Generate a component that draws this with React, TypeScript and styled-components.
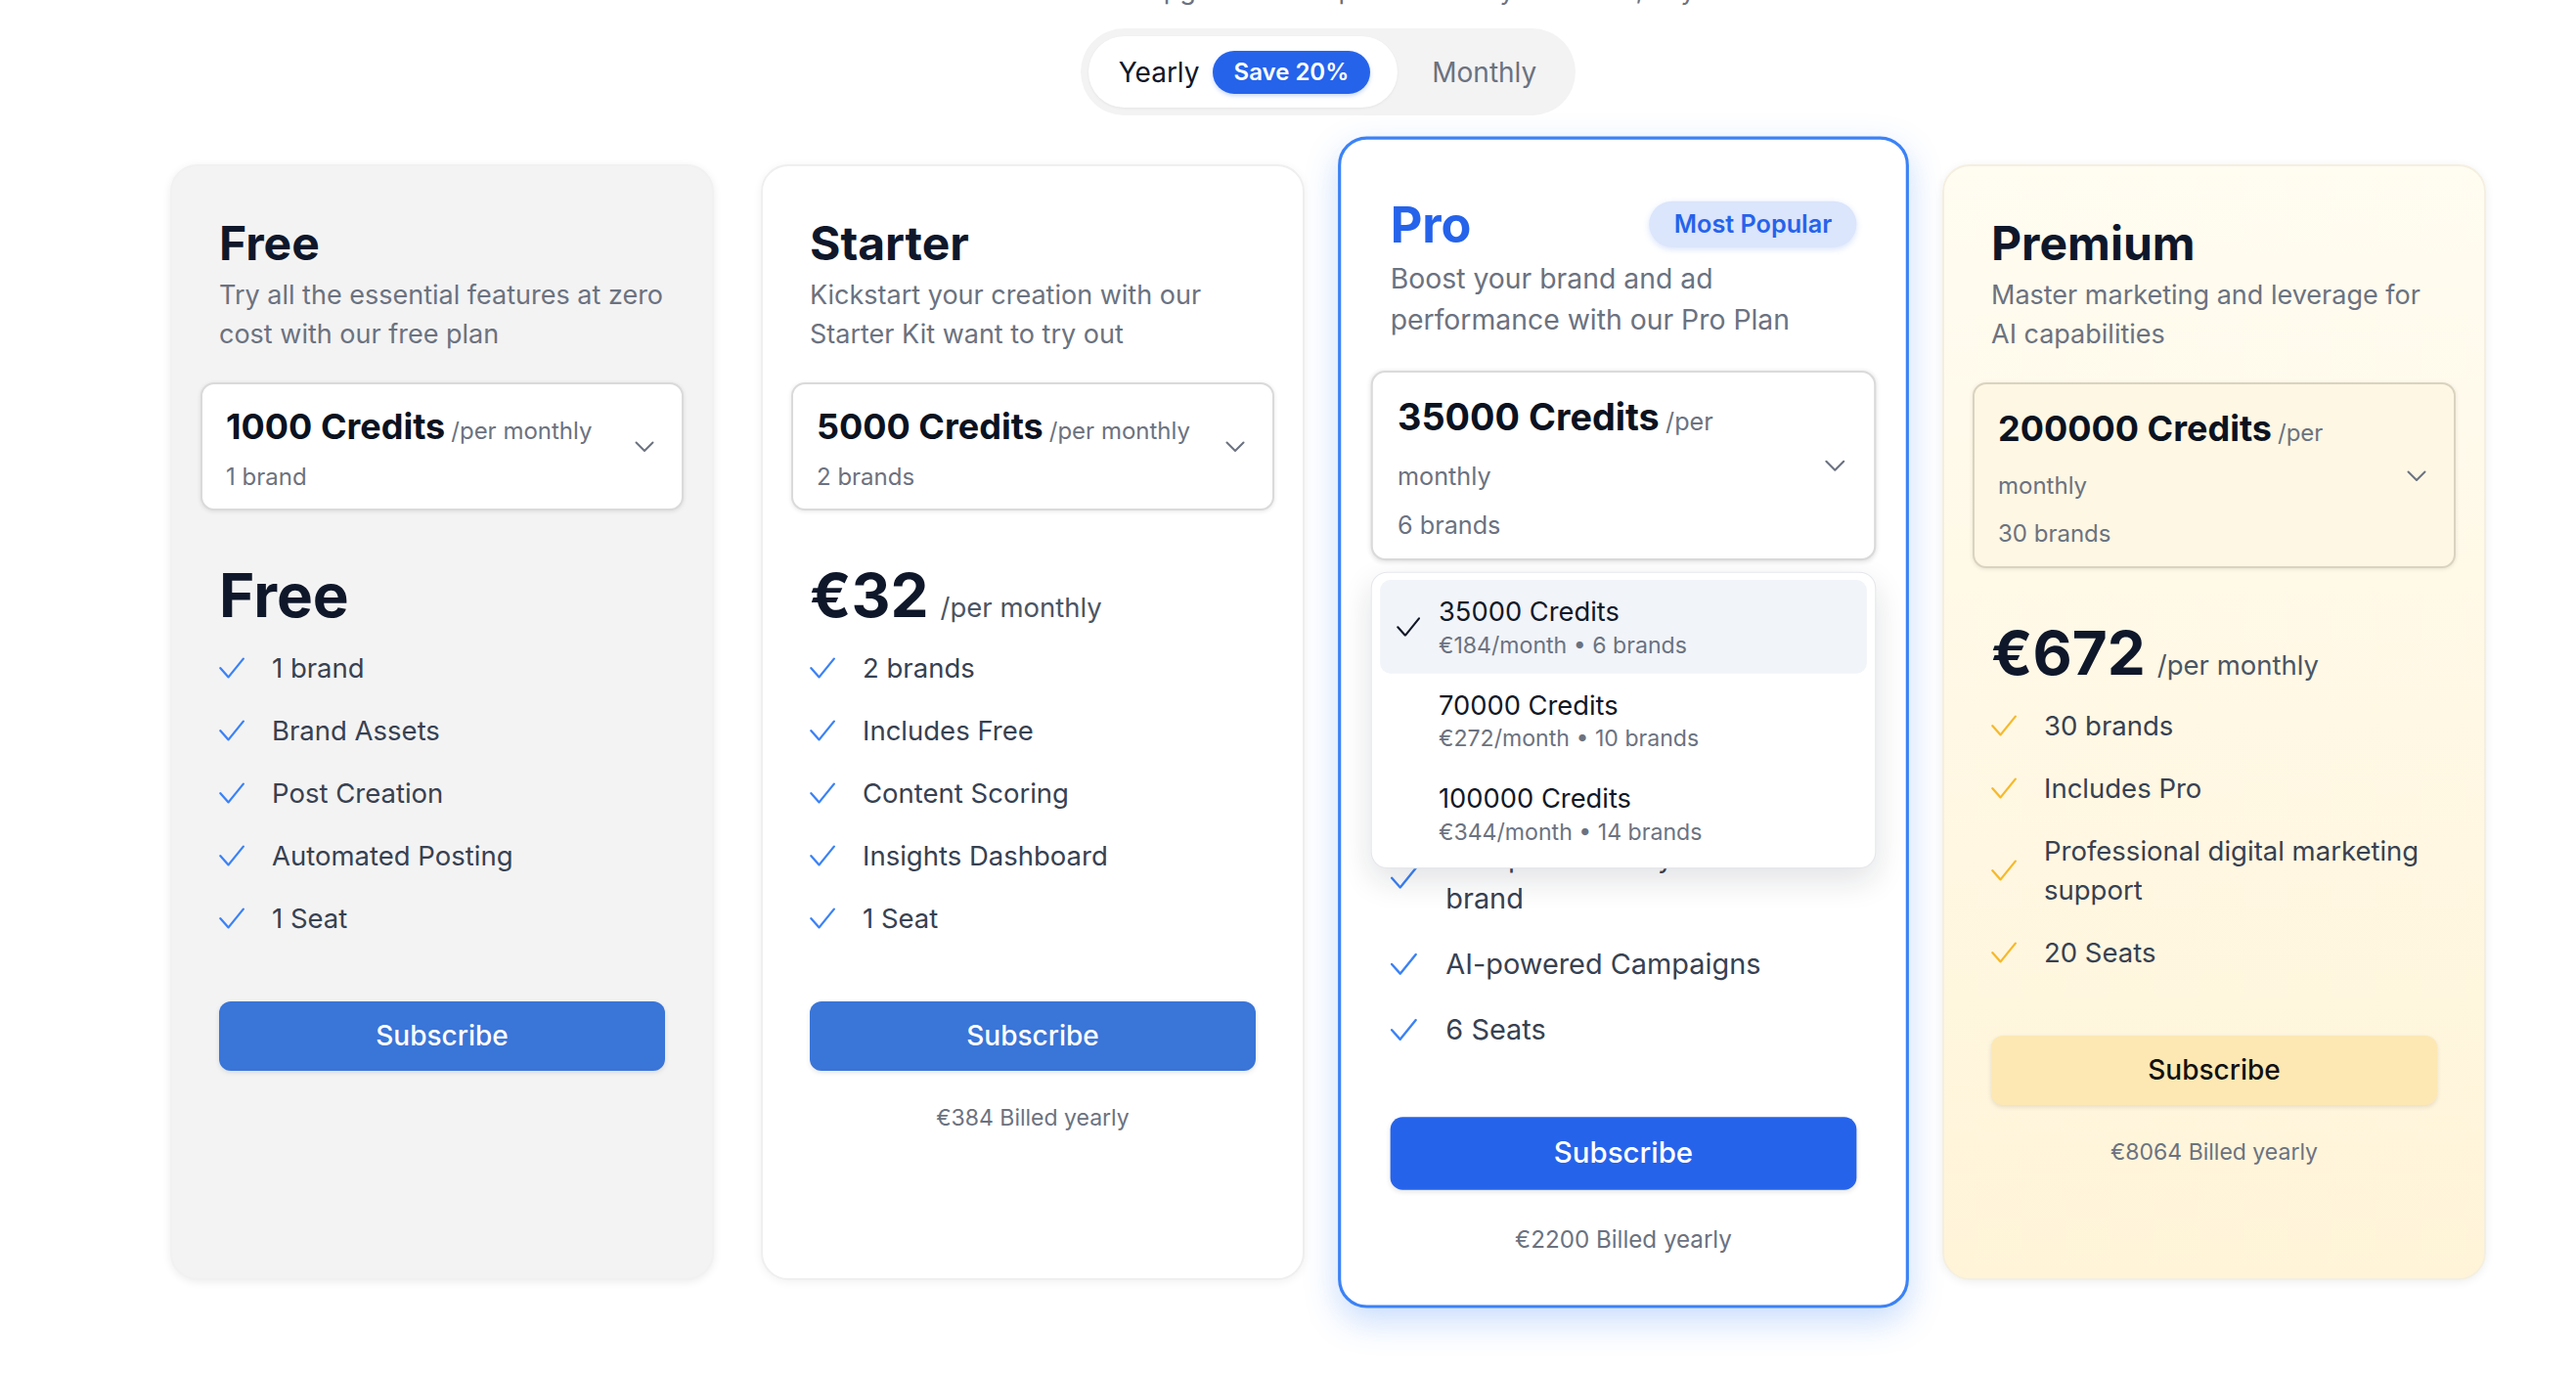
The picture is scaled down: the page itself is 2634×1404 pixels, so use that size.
import React from "react";
import styled, { createGlobalStyle, css } from "styled-components";

type Variant = "free" | "starter" | "pro" | "premium";

type Option = { credits: string; price: string; brands: string };

type Plan = {
  id: Variant;
  name: string;
  desc: string;
  credits: string;
  brands: string;
  price: string;
  per?: string;
  features: string[];
  billed?: string;
  popular?: boolean;
  options?: Option[];
};

const plans: Plan[] = [
  {
    id: "free",
    name: "Free",
    desc: "Try all the essential features at zero cost with our free plan",
    credits: "1000",
    brands: "1 brand",
    price: "Free",
    features: ["1 brand", "Brand Assets", "Post Creation", "Automated Posting", "1 Seat"],
  },
  {
    id: "starter",
    name: "Starter",
    desc: "Kickstart your creation with our Starter Kit want to try out",
    credits: "5000",
    brands: "2 brands",
    price: "€32",
    per: "/per monthly",
    features: ["2 brands", "Includes Free", "Content Scoring", "Insights Dashboard", "1 Seat"],
    billed: "€384 Billed yearly",
  },
  {
    id: "pro",
    name: "Pro",
    desc: "Boost your brand and ad performance with our Pro Plan",
    credits: "35000",
    brands: "6 brands",
    price: "€184",
    per: "/per monthly",
    features: [
      "6 brands",
      "Includes Starter",
      "Competitor analytics for each brand",
      "AI-powered Campaigns",
      "6 Seats",
    ],
    billed: "€2200 Billed yearly",
    popular: true,
    options: [
      { credits: "35000", price: "€184", brands: "6 brands" },
      { credits: "70000", price: "€272", brands: "10 brands" },
      { credits: "100000", price: "€344", brands: "14 brands" },
    ],
  },
  {
    id: "premium",
    name: "Premium",
    desc: "Master marketing and leverage for AI capabilities",
    credits: "200000",
    brands: "30 brands",
    price: "€672",
    per: "/per monthly",
    features: ["30 brands", "Includes Pro", "Professional digital marketing support", "20 Seats"],
    billed: "€8064 Billed yearly",
  },
];

const GlobalStyle = createGlobalStyle`
  html, body {
    margin: 0;
    padding: 0;
    background: #ffffff;
  }
  body {
    font-family: Inter, "Noto Sans", "Liberation Sans", sans-serif;
    color: #0f172a;
    overflow: hidden;
  }
`;

const Page = styled.div`
  box-sizing: border-box;
  width: 2634px;
  height: 1404px;
  padding-left: 82px;
  display: flex;
  flex-direction: column;
  align-items: center;
`;

const Subtitle = styled.p`
  margin: -30px 0 0;
  font-size: 27px;
  line-height: 40px;
  color: #6b7280;
  text-align: center;
`;

const Toggle = styled.div`
  margin-top: 19px;
  display: inline-flex;
  align-items: center;
  padding: 8px;
  border-radius: 999px;
  background: #f3f3f3;
`;

const ToggleOption = styled.button<{ $active?: boolean }>`
  display: flex;
  align-items: center;
  gap: 13px;
  height: 73px;
  border: none;
  border-radius: 999px;
  font-family: inherit;
  font-size: 28px;
  cursor: pointer;
  ${({ $active }) =>
    $active
      ? css`
          padding: 0 28px 0 31px;
          background: #ffffff;
          color: #0f172a;
          box-shadow: 0 1px 3px rgba(0, 0, 0, 0.06);
        `
      : css`
          padding: 0 32px 0 35px;
          background: transparent;
          color: #6b7280;
        `}
`;

const SaveBadge = styled.span`
  display: inline-flex;
  align-items: center;
  height: 44px;
  padding: 0 22px;
  border-radius: 999px;
  background: #2563eb;
  color: #ffffff;
  font-size: 24px;
  font-weight: 600;
  box-shadow: 0 2px 4px rgba(37, 99, 235, 0.25);
`;

const Cards = styled.div`
  margin-top: 50px;
  display: flex;
  align-items: stretch;
  gap: 48px;
`;

const cardVariants = {
  free: css`
    background: #f3f3f3;
    border: 2px solid #f1f1f1;
    box-shadow: 0 2px 8px rgba(0, 0, 0, 0.08);
  `,
  starter: css`
    background: #ffffff;
    border: 2px solid #efefef;
    box-shadow: 0 2px 10px rgba(0, 0, 0, 0.06);
  `,
  pro: css`
    padding-top: 54px;
    padding-bottom: 46px;
    background: #ffffff;
    border: 3px solid #3b82f6;
    transform: scale(1.05);
    z-index: 2;
    box-shadow: 0 12px 32px rgba(59, 130, 246, 0.28);
  `,
  premium: css`
    background: linear-gradient(180deg, #fffcf1 0%, #fff4d8 100%);
    border: 2px solid #f4efe0;
    box-shadow: 0 2px 10px rgba(0, 0, 0, 0.07);
  `,
};

const Card = styled.div<{ $variant: Variant }>`
  box-sizing: border-box;
  position: relative;
  flex: 0 0 556px;
  width: 556px;
  padding: 50px 48px 48px;
  border-radius: 28px;
  display: flex;
  flex-direction: column;
  ${({ $variant }) => cardVariants[$variant]}
`;

const TitleRow = styled.div`
  display: flex;
  align-items: center;
  justify-content: space-between;
`;

const Title = styled.h2<{ $accent?: boolean }>`
  margin: 0;
  font-size: 48px;
  font-weight: 700;
  line-height: 1.2;
  color: ${({ $accent }) => ($accent ? "#2563eb" : "#0f172a")};
`;

const PopularBadge = styled.span`
  display: inline-flex;
  align-items: center;
  height: 45px;
  padding: 0 24px;
  border-radius: 999px;
  background: #dbe5fb;
  color: #2563eb;
  font-size: 24px;
  font-weight: 600;
  box-shadow: 0 2px 6px rgba(37, 99, 235, 0.18);
`;

const Description = styled.p`
  margin: 4px 0 0;
  font-size: 27px;
  line-height: 40px;
  color: #6b7280;
`;

const SelectWrap = styled.div`
  position: relative;
  margin: 29px -19px 0;
`;

const SelectBox = styled.div<{ $cream?: boolean }>`
  box-sizing: border-box;
  display: flex;
  align-items: center;
  justify-content: space-between;
  gap: 12px;
  padding: ${({ $cream }) => ($cream ? "18px 28px 15px 24px" : "16px 28px 14px 24px")};
  border-radius: 14px;
  border: 2px solid ${({ $cream }) => ($cream ? "#d9d3bf" : "#dadada")};
  background: ${({ $cream }) => ($cream ? "#fdf7e4" : "#ffffff")};
  box-shadow: 0 1px 4px rgba(0, 0, 0, 0.1);
`;

const SelectText = styled.div`
  max-width: 388px;
`;

const CreditsLine = styled.div`
  font-size: 36px;
  font-weight: 700;
  line-height: 54px;
  color: #0b1220;
`;

const CreditsPer = styled.span`
  margin-left: 6px;
  font-size: 24px;
  font-weight: 400;
  line-height: 1;
  color: #6b7280;
`;

const BrandsLine = styled.div<{ $roomy?: boolean }>`
  margin-top: ${({ $roomy }) => ($roomy ? "9px" : "7px")};
  font-size: 24px;
  line-height: 36px;
  color: #6b7280;
`;

const Menu = styled.div`
  position: absolute;
  top: calc(100% + 11px);
  left: 0;
  right: 0;
  z-index: 5;
  padding: 7px 8px;
  border-radius: 16px;
  border: 1px solid #e5e7eb;
  background: #ffffff;
  box-shadow: 0 12px 30px rgba(15, 23, 42, 0.12);
`;

const MenuItem = styled.div<{ $selected?: boolean }>`
  display: flex;
  align-items: center;
  gap: 17px;
  padding: 14px 20px 13px 14px;
  border-radius: 10px;
  background: ${({ $selected }) => ($selected ? "#f1f4f9" : "transparent")};
`;

const MenuCheckSlot = styled.span`
  flex: 0 0 26px;
  display: flex;
  justify-content: center;
`;

const MenuTitle = styled.div`
  font-size: 26px;
  line-height: 34px;
  color: #111827;
`;

const MenuSub = styled.div`
  font-size: 22px;
  line-height: 30px;
  color: #6b7280;
`;

const PriceRow = styled.div`
  margin-top: 50px;
  display: flex;
  align-items: baseline;
  gap: 12px;
`;

const Amount = styled.span`
  font-size: 62px;
  font-weight: 700;
  line-height: 74px;
  color: #0f172a;
`;

const AmountPer = styled.span`
  font-size: 27.5px;
  color: #4b5563;
`;

const Features = styled.ul`
  list-style: none;
  margin: 17px 0 0;
  padding: 0;
  display: flex;
  flex-direction: column;
  gap: 24px;
`;

const Feature = styled.li`
  display: flex;
  align-items: center;
  gap: 28px;
  font-size: 27.5px;
  line-height: 40px;
  color: #374151;
`;

const buttonVariants = {
  free: css`
    background: #3a75d8;
    color: #ffffff;
  `,
  starter: css`
    background: #3a75d8;
    color: #ffffff;
  `,
  pro: css`
    background: #2563eb;
    color: #ffffff;
  `,
  premium: css`
    background: #fde8b4;
    color: #111111;
  `,
};

const SubscribeButton = styled.button<{ $variant: Variant }>`
  margin-top: 65px;
  height: 71px;
  width: 100%;
  border: none;
  border-radius: 12px;
  font-family: inherit;
  font-size: 28px;
  font-weight: 500;
  cursor: pointer;
  box-shadow: 0 2px 5px rgba(0, 0, 0, 0.1);
  ${({ $variant }) => buttonVariants[$variant]}
`;

const Billed = styled.div`
  margin-top: 30px;
  text-align: center;
  font-size: 23px;
  line-height: 36px;
  color: #6b7280;
`;

const CheckMark = ({ color, width = 26 }: { color: string; width?: number }) => (
  <svg width={width} height={(width * 22) / 26} viewBox="0 0 26 22" fill="none" style={{ flexShrink: 0 }}>
    <path
      d="M1.4 11.2 L9.6 20.4 L24.8 1.6"
      stroke={color}
      strokeWidth={2.3}
      strokeLinecap="round"
      strokeLinejoin="round"
    />
  </svg>
);

const Chevron = () => (
  <svg width="20" height="12" viewBox="0 0 20 12" fill="none" style={{ flexShrink: 0 }}>
    <path d="M1.5 1.5 L10 10 L18.5 1.5" stroke="#6b7280" strokeWidth={2} strokeLinecap="round" strokeLinejoin="round" />
  </svg>
);

const checkColor = (v: Variant) => (v === "premium" ? "#f6b92b" : "#3b82f6");

function PlanCard({ plan }: { plan: Plan }) {
  const cream = plan.id === "premium";
  return (
    <Card $variant={plan.id}>
      <TitleRow>
        <Title $accent={plan.id === "pro"}>{plan.name}</Title>
        {plan.popular && <PopularBadge>Most Popular</PopularBadge>}
      </TitleRow>
      <Description>{plan.desc}</Description>

      <SelectWrap>
        <SelectBox $cream={cream}>
          <SelectText>
            <CreditsLine>
              {plan.credits} Credits<CreditsPer>/per monthly</CreditsPer>
            </CreditsLine>
            <BrandsLine $roomy={cream}>{plan.brands}</BrandsLine>
          </SelectText>
          <Chevron />
        </SelectBox>
        {plan.options && (
          <Menu>
            {plan.options.map((o) => (
              <MenuItem key={o.credits} $selected={o.credits === plan.credits}>
                <MenuCheckSlot>
                  {o.credits === plan.credits && <CheckMark color="#111827" width={23} />}
                </MenuCheckSlot>
                <div>
                  <MenuTitle>{o.credits} Credits</MenuTitle>
                  <MenuSub>
                    {o.price}/month • {o.brands}
                  </MenuSub>
                </div>
              </MenuItem>
            ))}
          </Menu>
        )}
      </SelectWrap>

      <PriceRow>
        <Amount>{plan.price}</Amount>
        {plan.per && <AmountPer>{plan.per}</AmountPer>}
      </PriceRow>

      <Features>
        {plan.features.map((f) => (
          <Feature key={f}>
            <CheckMark color={checkColor(plan.id)} />
            <span>{f}</span>
          </Feature>
        ))}
      </Features>

      <SubscribeButton $variant={plan.id}>Subscribe</SubscribeButton>
      {plan.billed && <Billed>{plan.billed}</Billed>}
    </Card>
  );
}

export default function App() {
  return (
    <>
      <GlobalStyle />
      <Page>
        <Subtitle>Start free and then upgrade to the plan that fits your brand, anytime</Subtitle>
        <Toggle>
          <ToggleOption $active>
            Yearly
            <SaveBadge>Save 20%</SaveBadge>
          </ToggleOption>
          <ToggleOption>Monthly</ToggleOption>
        </Toggle>
        <Cards>
          {plans.map((p) => (
            <PlanCard key={p.id} plan={p} />
          ))}
        </Cards>
      </Page>
    </>
  );
}
